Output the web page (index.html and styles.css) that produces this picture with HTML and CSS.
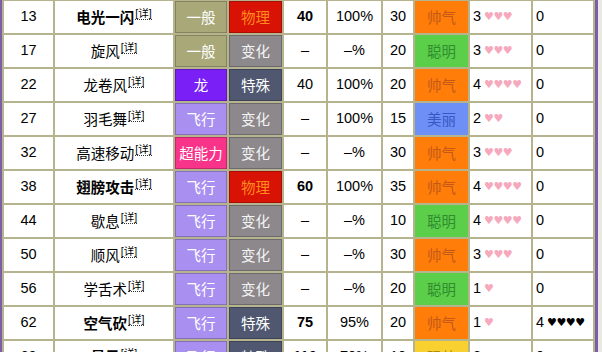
FILE: index.html
```html
<!DOCTYPE html>
<html lang="zh">
<head>
<meta charset="utf-8">
<link rel="stylesheet" href="styles.css">
</head>
<body>
<div class="frame">
  <div class="grid">
    <div class="c num">13</div>
    <div class="c nm b"><span>电光一闪<sup class="d">[详]</sup></span></div>
    <div class="c ty normal">一般</div>
    <div class="c ca phys">物理</div>
    <div class="c b">40</div>
    <div class="c">100%</div>
    <div class="c">30</div>
    <div class="c ap cool">帅气</div>
    <div class="c hs">3 <span class="h">♥♥♥</span></div>
    <div class="c hs">0</div>

    <div class="c num">17</div>
    <div class="c nm"><span>旋风<sup class="d">[详]</sup></span></div>
    <div class="c ty normal">一般</div>
    <div class="c ca stat">变化</div>
    <div class="c">–</div>
    <div class="c">–%</div>
    <div class="c">20</div>
    <div class="c ap clever">聪明</div>
    <div class="c hs">3 <span class="h">♥♥♥</span></div>
    <div class="c hs">0</div>

    <div class="c num">22</div>
    <div class="c nm"><span>龙卷风<sup class="d">[详]</sup></span></div>
    <div class="c ty dragon">龙</div>
    <div class="c ca spec">特殊</div>
    <div class="c">40</div>
    <div class="c">100%</div>
    <div class="c">20</div>
    <div class="c ap cool">帅气</div>
    <div class="c hs">4 <span class="h">♥♥♥♥</span></div>
    <div class="c hs">0</div>

    <div class="c num">27</div>
    <div class="c nm"><span>羽毛舞<sup class="d">[详]</sup></span></div>
    <div class="c ty flying">飞行</div>
    <div class="c ca stat">变化</div>
    <div class="c">–</div>
    <div class="c">100%</div>
    <div class="c">15</div>
    <div class="c ap beauty">美丽</div>
    <div class="c hs">2 <span class="h">♥♥</span></div>
    <div class="c hs">0</div>

    <div class="c num">32</div>
    <div class="c nm"><span>高速移动<sup class="d">[详]</sup></span></div>
    <div class="c ty psychic">超能力</div>
    <div class="c ca stat">变化</div>
    <div class="c">–</div>
    <div class="c">–%</div>
    <div class="c">30</div>
    <div class="c ap cool">帅气</div>
    <div class="c hs">3 <span class="h">♥♥♥</span></div>
    <div class="c hs">0</div>

    <div class="c num">38</div>
    <div class="c nm b"><span>翅膀攻击<sup class="d">[详]</sup></span></div>
    <div class="c ty flying">飞行</div>
    <div class="c ca phys">物理</div>
    <div class="c b">60</div>
    <div class="c">100%</div>
    <div class="c">35</div>
    <div class="c ap cool">帅气</div>
    <div class="c hs">4 <span class="h">♥♥♥♥</span></div>
    <div class="c hs">0</div>

    <div class="c num">44</div>
    <div class="c nm"><span>歇息<sup class="d">[详]</sup></span></div>
    <div class="c ty flying">飞行</div>
    <div class="c ca stat">变化</div>
    <div class="c">–</div>
    <div class="c">–%</div>
    <div class="c">10</div>
    <div class="c ap clever">聪明</div>
    <div class="c hs">4 <span class="h">♥♥♥♥</span></div>
    <div class="c hs">0</div>

    <div class="c num">50</div>
    <div class="c nm"><span>顺风<sup class="d">[详]</sup></span></div>
    <div class="c ty flying">飞行</div>
    <div class="c ca stat">变化</div>
    <div class="c">–</div>
    <div class="c">–%</div>
    <div class="c">30</div>
    <div class="c ap cool">帅气</div>
    <div class="c hs">3 <span class="h">♥♥♥</span></div>
    <div class="c hs">0</div>

    <div class="c num">56</div>
    <div class="c nm"><span>学舌术<sup class="d">[详]</sup></span></div>
    <div class="c ty flying">飞行</div>
    <div class="c ca stat">变化</div>
    <div class="c">–</div>
    <div class="c">–%</div>
    <div class="c">20</div>
    <div class="c ap clever">聪明</div>
    <div class="c hs">1 <span class="h">♥</span></div>
    <div class="c hs">0</div>

    <div class="c num">62</div>
    <div class="c nm b"><span>空气砍<sup class="d">[详]</sup></span></div>
    <div class="c ty flying">飞行</div>
    <div class="c ca spec">特殊</div>
    <div class="c b">75</div>
    <div class="c">95%</div>
    <div class="c">20</div>
    <div class="c ap cool">帅气</div>
    <div class="c hs">1 <span class="h">♥</span></div>
    <div class="c hs">4 <span class="jh">♥♥♥♥</span></div>

    <div class="c num">68</div>
    <div class="c nm b"><span>暴风<sup class="d">[详]</sup></span></div>
    <div class="c ty flying">飞行</div>
    <div class="c ca spec">特殊</div>
    <div class="c b">110</div>
    <div class="c">70%</div>
    <div class="c">10</div>
    <div class="c ap tough">强壮</div>
    <div class="c hs">2 <span class="h">♥♥</span></div>
    <div class="c hs">0</div>
  </div>
</div>
</body>
</html>
```

FILE: styles.css
```css
html, body {
  margin: 0;
  padding: 0;
  background: #e9e9e4;
  overflow: hidden;
}
body {
  width: 602px;
  height: 352px;
  font-family: "Liberation Sans", Arial, "Noto Sans CJK SC", sans-serif;
  font-size: 14.5px;
  color: #000;
}
.frame {
  width: 593px;
  margin-top: -1px;
  border-left: 2px solid #7b5ea7;
  border-right: 3px solid #7b5ea7;
  background: #b5b48f;
}
.grid {
  display: grid;
  grid-template-columns: 49px 118px 52px 53px 42px 53px 30px 53px 61px 60px;
  grid-auto-rows: 32px;
  gap: 2px;
  padding: 2px;
}
.c {
  background: #fff;
  display: flex;
  align-items: center;
  justify-content: center;
  white-space: nowrap;
  padding-bottom: 2px;
  box-sizing: border-box;
}
.b { font-weight: bold; }
.d {
  font-size: 10.5px;
  font-weight: normal;
  vertical-align: 6px;
  line-height: 1;
  border-bottom: 1px dotted #333;
  margin-left: 1px;
}
.ty, .ca {
  color: #fff;
  border: 1px solid rgba(0, 0, 0, 0.22);
}
.normal { background: #a8a878; }
.dragon { background: #7a1ff5; }
.flying { background: #a98ff0; }
.psychic { background: #f8348a; }
.phys { background: #d81204; color: #ff8a1e; }
.stat { background: #8c888c; color: #f4f4f4; }
.spec { background: #4f5870; }
.cool { background: #ff7d08; color: #c4581a; }
.clever { background: #5ccf4a; color: #2f8c2f; }
.beauty { background: #6e8ff5; color: #3857c5; }
.tough { background: #f8d030; color: #b08a00; }
.hs {
  justify-content: flex-start;
  padding-left: 3px;
}
.h {
  color: #f6a9bd;
  font-size: 11px;
  margin-left: 3px;
  letter-spacing: -0.5px;
  font-family: "DejaVu Sans", sans-serif;
}
.jh {
  color: #000;
  font-size: 11px;
  margin-left: 3px;
  letter-spacing: -0.5px;
  font-family: "DejaVu Sans", sans-serif;
}
```
